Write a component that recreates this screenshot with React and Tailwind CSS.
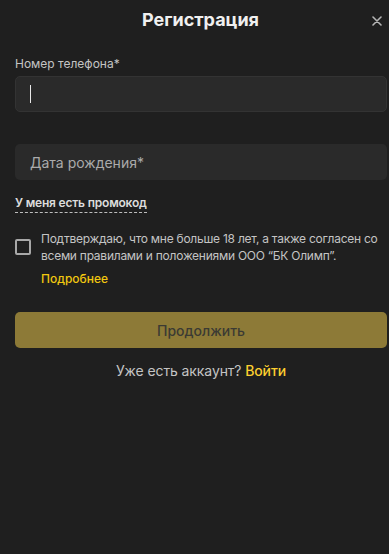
import React from "react";

export default function App() {
  return (
    <div
      className="w-[389px] h-[554px] bg-[#1f1f1f] text-white overflow-hidden"
      style={{ fontFamily: "Inter, 'Noto Sans', sans-serif" }}
    >
      <div className="relative h-10 flex items-center justify-center pl-[12px]">
        <h1 className="text-[18px] font-bold text-[#f0f0f0] leading-none">Регистрация</h1>
        <button className="absolute right-[6px] top-[15px] w-3 h-3 flex items-center justify-center">
          <svg width="10" height="10" viewBox="0 0 10 10" fill="none">
            <path d="M1 1L9 9M9 1L1 9" stroke="#b5b5b5" strokeWidth="1.6" strokeLinecap="round" />
          </svg>
        </button>
      </div>

      <div className="px-[15px] pr-[2px]">
        <div className="mt-[16px] text-[12px] leading-4 text-[#c4c4c4]">Номер телефона*</div>
        <div className="mt-[4px] h-[36px] rounded-[5px] bg-[#2a2a2a] border border-[#333333] flex items-center pl-[14px]">
          <div className="w-px h-[18px] bg-[#e8e8e8]" />
        </div>

        <div className="mt-[32px] h-[36px] rounded-[5px] bg-[#2a2a2a] flex items-center pl-[15px]">
          <span className="text-[14px] text-[#ababab]">Дата рождения*</span>
        </div>

        <div className="mt-[15px] flex">
          <span className="block text-[12px] font-semibold leading-4 tracking-[-0.2px] text-[#dcdcdc] border-b border-dashed border-[#bdbdbd] pb-[1px]">
            У меня есть промокод
          </span>
        </div>

        <div className="mt-[17px] flex items-start gap-[10px]">
          <div className="mt-[9px] w-[16px] h-[16px] shrink-0 rounded-[2px] border-2 border-[#a8a8a8]" />
          <div className="flex flex-col">
            <p className="text-[12px] leading-[17px] tracking-[-0.25px] text-[#c4c4c4]">
              Подтверждаю, что мне больше 18 лет, а также согласен со всеми правилами и положениями ООО “БК Олимп”.
            </p>
            <span className="mt-[6px] text-[12px] leading-[17px] font-medium text-[#f2c80f]">Подробнее</span>
          </div>
        </div>

        <button className="mt-[25px] w-full h-[36px] rounded-[5px] bg-[#8d7a37] text-[14px] font-medium text-[#3b3a33] flex items-center justify-center">
          Продолжить
        </button>

        <div className="mt-[13px] text-center text-[14px] leading-5 tracking-[-0.1px] text-[#c4c4c4]">
          Уже есть аккаунт? <span className="font-medium text-[#fccf2f]">Войти</span>
        </div>
      </div>
    </div>
  );
}
